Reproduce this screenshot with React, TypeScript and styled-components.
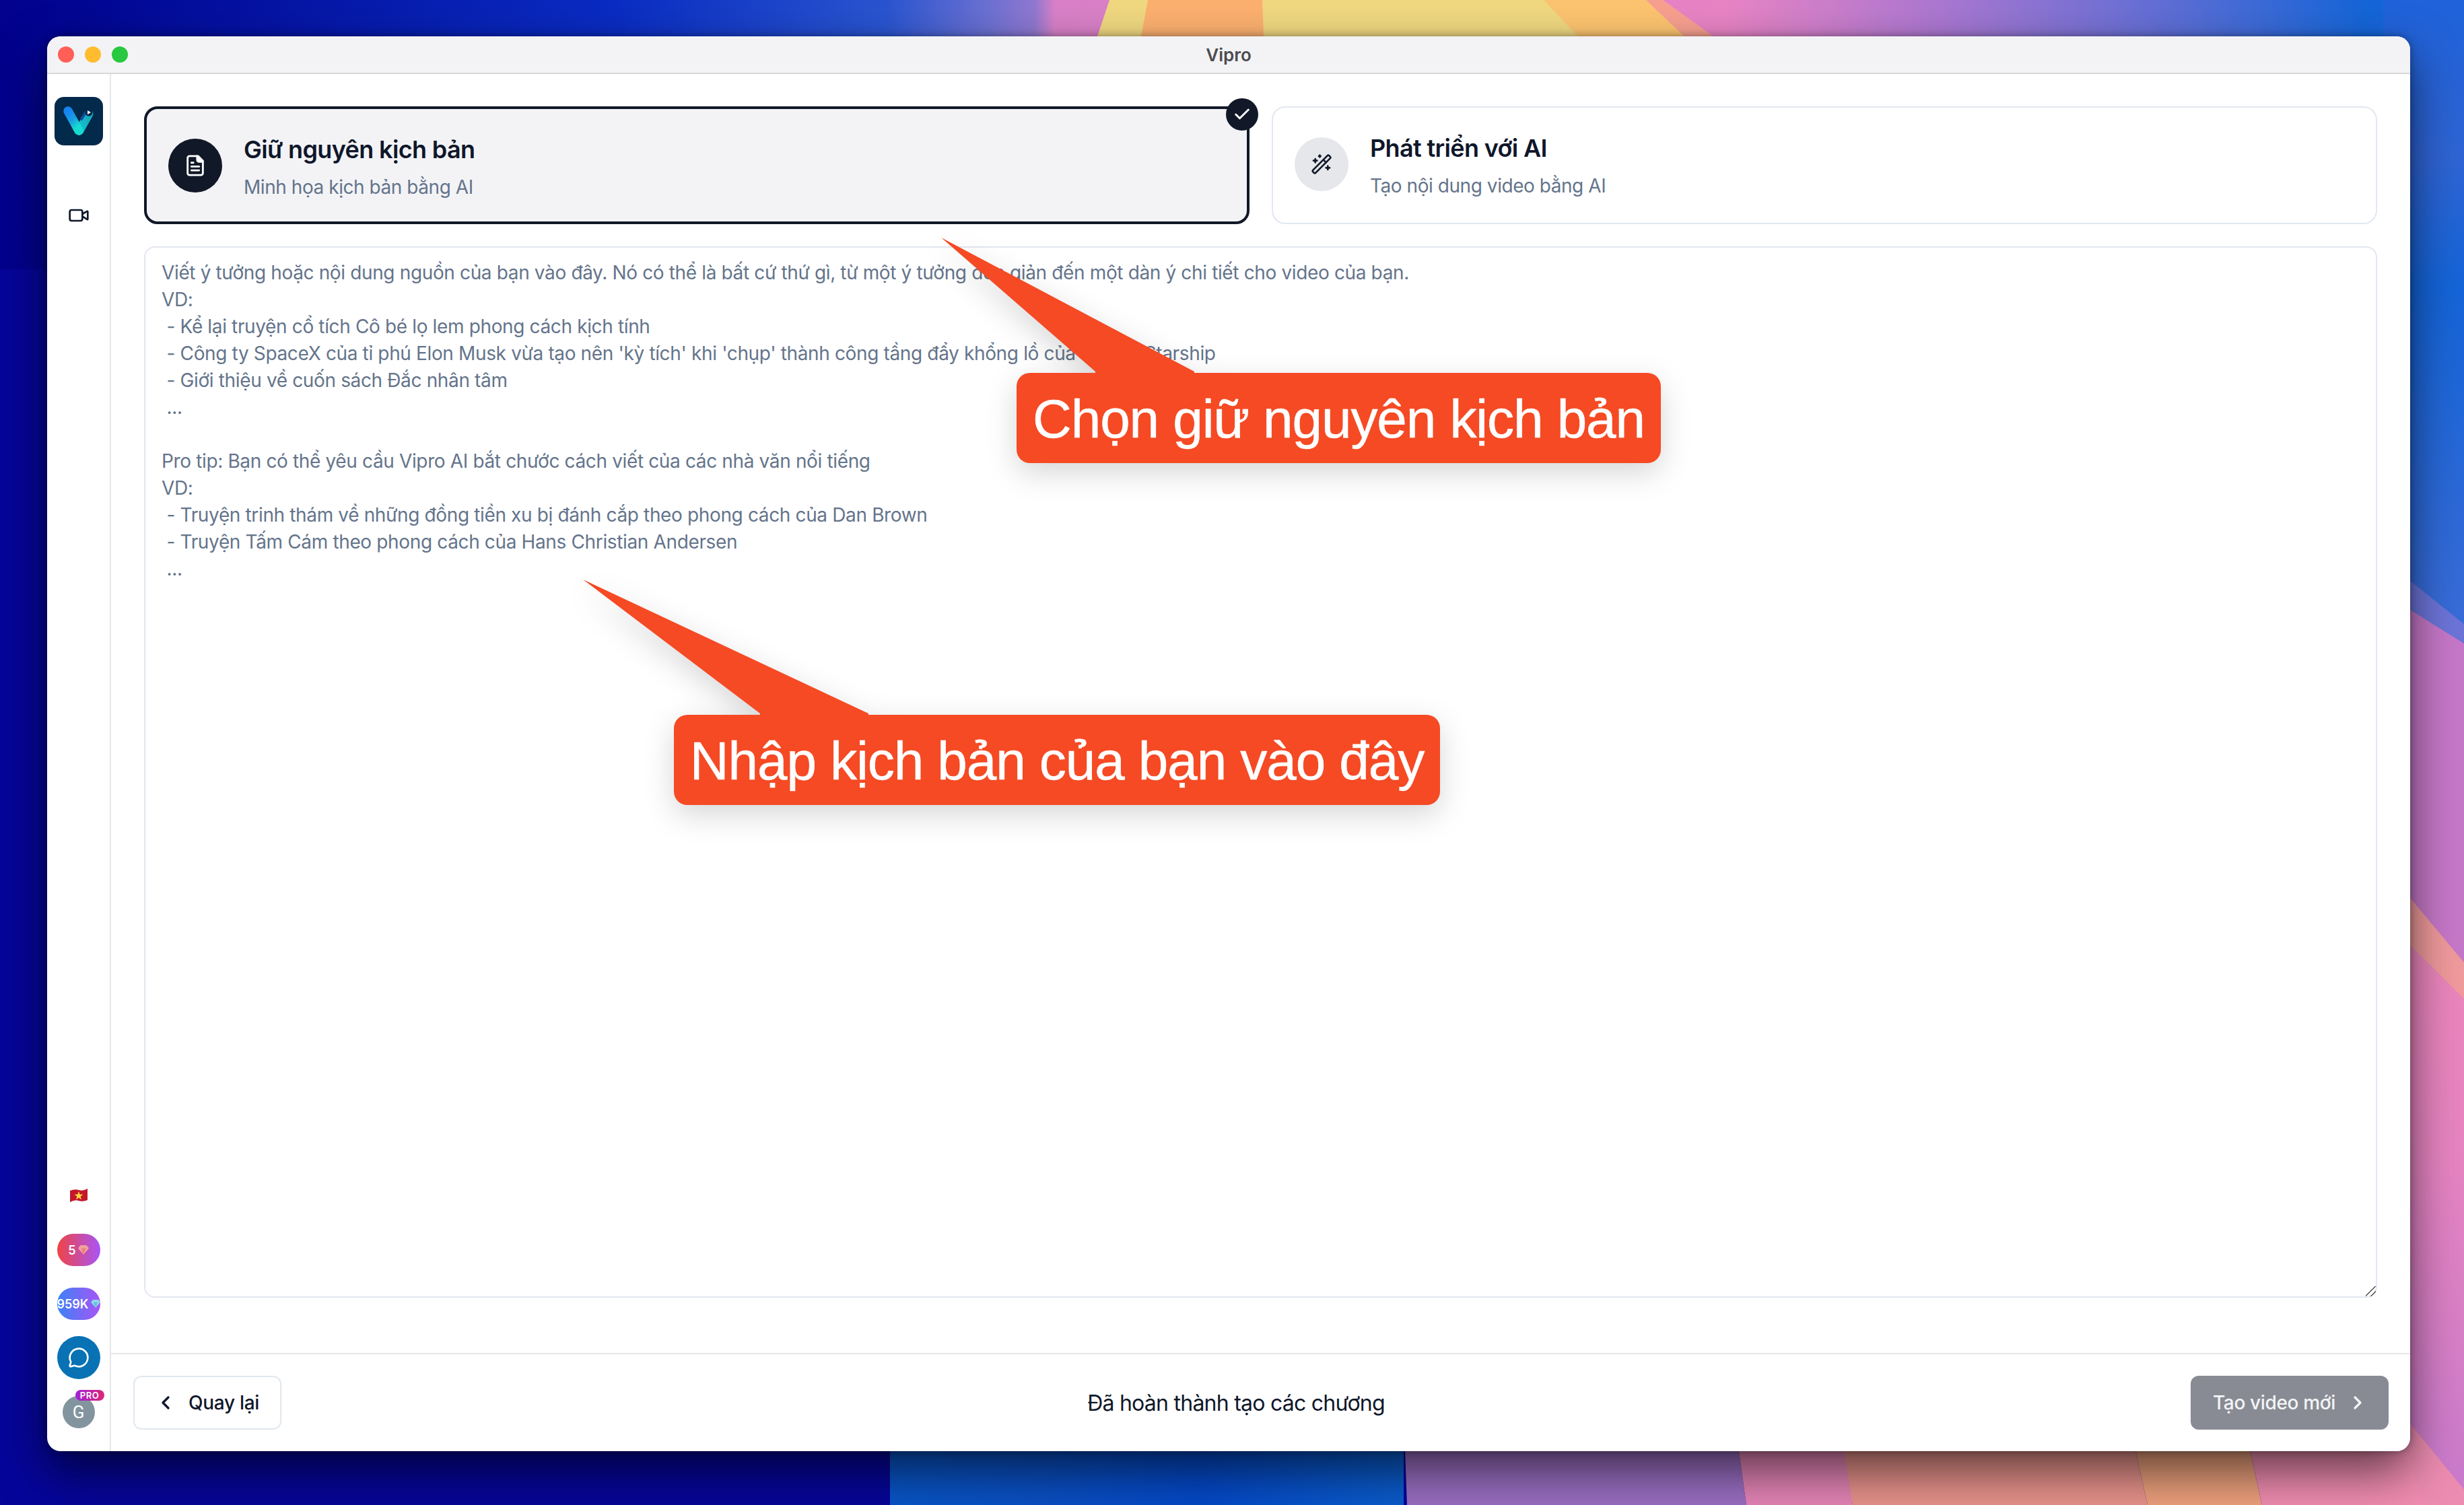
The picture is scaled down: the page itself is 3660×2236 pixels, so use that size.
import React from 'react'
import styled, { createGlobalStyle } from 'styled-components'
import { ChevronLeft, ChevronRight, Check, MessageCircle, Video, WandSparkles } from 'lucide-react'

const GlobalStyle = createGlobalStyle`
  html, body {
    margin: 0;
    padding: 0;
  }
  body {
    font-family: Inter, "Liberation Sans", sans-serif;
  }
  * {
    box-sizing: border-box;
  }
`

const Page = styled.div`
  position: relative;
  width: 3660px;
  height: 2236px;
  padding: 54px 80px 80px 70px;
  overflow: hidden;
  display: flex;
`

const WallpaperSvg = styled.svg`
  position: absolute;
  inset: 0;
  width: 3660px;
  height: 2236px;
`

const Window = styled.div`
  position: relative;
  flex: 1;
  display: flex;
  flex-direction: column;
  background: white;
  border-radius: 20px;
  overflow: hidden;
`

const WindowShadow = styled.div`
  position: relative;
  flex: 1;
  display: flex;
  border-radius: 20px;
  box-shadow: 0 30px 70px rgba(0, 0, 0, 0.6), 0 0 12px rgba(0, 0, 0, 0.35);
`

const TitleBar = styled.div`
  position: relative;
  height: 56px;
  flex-shrink: 0;
  display: flex;
  align-items: center;
  gap: 16px;
  padding-left: 16px;
  background: #f3f3f6;
  border-bottom: 2px solid #d9d9db;
`

const Dot = styled.span<{ $color: string }>`
  width: 24px;
  height: 24px;
  border-radius: 50%;
  background: ${p => p.$color};
`

const WindowTitle = styled.div`
  position: absolute;
  left: 0;
  right: 0;
  text-align: center;
  font-size: 26px;
  font-weight: 600;
  color: #4c4c4f;
`

const Body = styled.div`
  flex: 1;
  min-height: 0;
  display: flex;
`

const Sidebar = styled.aside`
  width: 95px;
  flex-shrink: 0;
  display: flex;
  flex-direction: column;
  align-items: center;
  justify-content: space-between;
  padding: 34px 0 34px;
  border-right: 2px solid #e5e7eb;
`

const SideTop = styled.div`
  display: flex;
  flex-direction: column;
  align-items: center;
  gap: 88px;
  color: #0f172a;
`

const SideBottom = styled.div`
  display: flex;
  flex-direction: column;
  align-items: center;
`

const FlagSvg = styled.svg`
  width: 28px;
  height: 22px;
  margin-bottom: 46px;
`

const Pill = styled.div<{ $from: string }>`
  width: 64px;
  height: 48px;
  border-radius: 24px;
  margin-bottom: ${p => (p.$from === '#ef4444' ? 32 : 24)}px;
  display: flex;
  align-items: center;
  justify-content: center;
  gap: 3px;
  background: linear-gradient(90deg, ${p => p.$from}, #a855f7);
  color: white;
  font-size: 18px;
  font-weight: 600;
  white-space: nowrap;
  overflow: hidden;
`

const ChatBtn = styled.div`
  width: 64px;
  height: 64px;
  border-radius: 50%;
  margin-bottom: 25px;
  background: #0872b4;
  color: white;
  display: flex;
  align-items: center;
  justify-content: center;
`

const Avatar = styled.div`
  position: relative;
  width: 48px;
  height: 48px;
  border-radius: 50%;
  background: #82959f;
  color: white;
  font-family: Roboto, sans-serif;
  font-size: 26px;
  display: flex;
  align-items: center;
  justify-content: center;
`

const ProBadge = styled.span`
  position: absolute;
  left: 19px;
  top: -9px;
  width: 43px;
  height: 16px;
  border-radius: 8px;
  background: linear-gradient(90deg, #a021d8, #db2777);
  font-family: Inter, sans-serif;
  font-size: 13px;
  font-weight: 600;
  letter-spacing: 0.5px;
  line-height: 16px;
  text-align: center;
`

const Main = styled.main`
  flex: 1;
  min-width: 0;
  display: flex;
  flex-direction: column;
`

const Content = styled.div`
  flex: 1;
  min-height: 0;
  display: flex;
  flex-direction: column;
  gap: 33px;
  padding: 48px 49px 82px 49px;
`

const Cards = styled.div`
  display: grid;
  grid-template-columns: 1fr 1fr;
  gap: 33px;
  flex-shrink: 0;
`

const Card = styled.div<{ $active?: boolean }>`
  position: relative;
  height: 175px;
  display: flex;
  align-items: center;
  gap: 32px;
  padding: 0 32px ${p => (p.$active ? 0 : 3)}px;
  border-radius: 20px;
  border: ${p => (p.$active ? '4px solid #111827' : '2px solid #e2e8f0')};
  background: ${p => (p.$active ? '#f3f3f6' : 'white')};
`

const CardIcon = styled.div<{ $active?: boolean }>`
  width: 80px;
  height: 80px;
  border-radius: 50%;
  flex-shrink: 0;
  display: flex;
  align-items: center;
  justify-content: center;
  background: ${p => (p.$active ? '#111827' : '#e5e7eb')};
  color: ${p => (p.$active ? 'white' : '#111827')};
`

const CardTitle = styled.div`
  font-size: 36px;
  line-height: 56px;
  font-weight: 600;
  letter-spacing: -0.65px;
  color: #0f172a;
`

const CardSub = styled.div`
  margin-top: 8px;
  font-size: 28px;
  line-height: 40px;
  letter-spacing: -0.45px;
  color: #64748b;
`

const CheckMark = styled.div`
  position: absolute;
  top: -16px;
  right: -17px;
  width: 48px;
  height: 48px;
  border-radius: 50%;
  background: #111827;
  color: white;
  display: flex;
  align-items: center;
  justify-content: center;
`

const Script = styled.div`
  flex: 1;
  min-height: 0;
  padding: 17px 24px;
  border: 2px solid #e2e8f0;
  border-radius: 16px;
  font-size: 28px;
  line-height: 40px;
  letter-spacing: -0.36px;
  color: #64748b;
  white-space: pre-wrap;
  overflow: auto;
  resize: vertical;

  &::-webkit-resizer {
    background: linear-gradient(
      135deg,
      transparent 46%,
      #555 46%,
      #555 53%,
      transparent 53%,
      transparent 70%,
      #555 70%,
      #555 77%,
      transparent 77%
    );
  }
`

const Footer = styled.div`
  flex-shrink: 0;
  height: 146px;
  display: flex;
  align-items: center;
  justify-content: space-between;
  padding: 0 32px 0 33px;
  border-top: 2px solid #e5e7eb;
`

const BackBtn = styled.button`
  width: 220px;
  height: 80px;
  display: flex;
  align-items: center;
  gap: 18px;
  padding: 0 0 0 30px;
  font: 500 28px Inter, sans-serif;
  letter-spacing: -0.3px;
  color: #0f172a;
  background: white;
  border: 2px solid #e2e8f0;
  border-radius: 12px;
`

const NextBtn = styled.button`
  width: 294px;
  height: 80px;
  display: flex;
  align-items: center;
  gap: 17px;
  padding: 0 0 0 33px;
  font: 500 28px Inter, sans-serif;
  letter-spacing: -0.36px;
  color: #f3f4f6;
  background: #888b94;
  border: none;
  border-radius: 12px;
`

const Status = styled.div`
  font-size: 32px;
  letter-spacing: -0.75px;
  color: #0f172a;
`

const Callout = styled.div<{ $left: number; $top: number; $width: number }>`
  position: absolute;
  left: ${p => p.$left}px;
  top: ${p => p.$top}px;
  width: ${p => p.$width}px;
  height: 134px;
  padding-top: 4px;
  border-radius: 20px;
  background: #f54a24;
  color: white;
  font-family: "Liberation Sans", Arial, sans-serif;
  font-size: 80px;
  letter-spacing: -1.05px;
  -webkit-text-stroke: 0.6px white;
  display: flex;
  align-items: center;
  justify-content: center;
  white-space: nowrap;
  filter: drop-shadow(0 14px 22px rgba(0, 0, 0, 0.16));
`

const Pointer = styled.svg<{ $left: number }>`
  position: absolute;
  left: ${p => p.$left}px;
  bottom: calc(100% - 2px);
`

const scriptText = `Viết ý tưởng hoặc nội dung nguồn của bạn vào đây. Nó có thể là bất cứ thứ gì, từ một ý tưởng đơn giản đến một dàn ý chi tiết cho video của bạn.
VD:
 - Kể lại truyện cổ tích Cô bé lọ lem phong cách kịch tính
 - Công ty SpaceX của tỉ phú Elon Musk vừa tạo nên 'kỳ tích' khi 'chụp' thành công tầng đẩy khổng lồ của tên lửa Starship
 - Giới thiệu về cuốn sách Đắc nhân tâm
 ...

Pro tip: Bạn có thể yêu cầu Vipro AI bắt chước cách viết của các nhà văn nổi tiếng
VD:
 - Truyện trinh thám về những đồng tiền xu bị đánh cắp theo phong cách của Dan Brown
 - Truyện Tấm Cám theo phong cách của Hans Christian Andersen
 ...`

const Wallpaper = () => (
  <WallpaperSvg viewBox="0 0 3660 2236">
    <defs>
      <linearGradient id="top" x1="0" x2="3660" y1="0" y2="0" gradientUnits="userSpaceOnUse">
        <stop offset="0" stopColor="#01018c" />
        <stop offset="0.25" stopColor="#0a2cc2" />
        <stop offset="0.36" stopColor="#2a55d0" />
        <stop offset="0.4" stopColor="#6a70d2" />
        <stop offset="0.42" stopColor="#9078d0" />
        <stop offset="0.428" stopColor="#d880c8" />
        <stop offset="0.7" stopColor="#e884c4" />
        <stop offset="0.78" stopColor="#b078d0" />
        <stop offset="0.86" stopColor="#7070d4" />
        <stop offset="0.96" stopColor="#1565d8" />
      </linearGradient>
      <linearGradient id="rightPink" x1="0" x2="0" y1="1400" y2="2236" gradientUnits="userSpaceOnUse">
        <stop offset="0" stopColor="#ec86bc" />
        <stop offset="0.4" stopColor="#e684c2" />
        <stop offset="1" stopColor="#c87acc" />
      </linearGradient>
      <linearGradient id="rightBlue" x1="0" x2="0" y1="0" y2="950" gradientUnits="userSpaceOnUse">
        <stop offset="0" stopColor="#1f62da" />
        <stop offset="0.25" stopColor="#2f64d4" />
        <stop offset="0.45" stopColor="#1464d8" />
        <stop offset="1" stopColor="#3b6cd8" />
      </linearGradient>
      <linearGradient id="bottomBlue" x1="1322" x2="2085" y1="0" y2="0" gradientUnits="userSpaceOnUse">
        <stop offset="0" stopColor="#0855c8" />
        <stop offset="0.3" stopColor="#0a4fc4" />
        <stop offset="0.6" stopColor="#0448c8" />
        <stop offset="1" stopColor="#0a5ccc" />
      </linearGradient>
    </defs>
    <rect width="3660" height="2236" fill="#05059a" />
    <rect width="3660" height="400" fill="url(#top)" />
    <polygon points="1648,0 2445,0 2502,54 1630,54" fill="#f0d880" />
    <polygon points="1705,0 1875,0 1877,54 1695,54" fill="#fcb070" />
    <polygon points="2293,0 2445,0 2502,54 2344,54" fill="#fcc470" />
    <polygon points="2445,0 2470,0 2545,54 2502,54" fill="#f8a090" />
    <rect x="3540" y="0" width="120" height="960" fill="url(#rightBlue)" />
    <polygon points="3540,831 3660,927 3660,956 3540,881" fill="#6c74d8" />
    <polygon points="3540,881 3660,956 3660,1500 3540,1400" fill="#c678c8" />
    <polygon points="3540,1365 3660,1484 3660,2236 3540,2236" fill="url(#rightPink)" />
    <polygon points="3540,1286 3660,1430 3660,1484 3540,1365" fill="#f09a9c" />
    <polygon points="3540,2066 3660,2213 3660,2236 3540,2236" fill="#ec8cb0" />
    <rect x="1322" y="2100" width="763" height="136" fill="url(#bottomBlue)" />
    <polygon points="2085,2100 2575,2100 2594,2236 2090,2236" fill="#9a6ec2" />
    <polygon points="2575,2100 2740,2100 2752,2236 2594,2236" fill="#e484b6" />
    <polygon points="2730,2100 3160,2100 3190,2236 2752,2236" fill="#e8928c" />
    <polygon points="3160,2100 3330,2100 3360,2236 3190,2236" fill="#eca07c" />
    <polygon points="3330,2100 3560,2100 3600,2236 3360,2236" fill="#f08cb0" />
  </WallpaperSvg>
)

const Logo = () => (
  <svg width="72" height="72" viewBox="0 0 72 72">
    <defs>
      <linearGradient id="vLeft" x1="0" x2="0.5" y1="0" y2="1">
        <stop offset="0" stopColor="#1583f0" />
        <stop offset="0.55" stopColor="#1aa0e0" />
        <stop offset="1" stopColor="#16dcd0" />
      </linearGradient>
      <linearGradient id="vRight" x1="0" x2="1" y1="1" y2="0">
        <stop offset="0" stopColor="#12c4d4" />
        <stop offset="1" stopColor="#18a8b8" />
      </linearGradient>
    </defs>
    <rect width="72" height="72" rx="14" fill="#03294b" />
    <path d="M37 50 L51 25" stroke="url(#vRight)" strokeWidth="13" strokeLinecap="round" />
    <path d="M20 21 L36 50" stroke="url(#vLeft)" strokeWidth="13.5" strokeLinecap="round" />
    <path d="M40 33 L47 22" stroke="#0f4f9a" strokeWidth="4" strokeLinecap="round" />
    <circle cx="51" cy="23" r="5.5" fill="#03294b" />
    <polygon points="49,20 49,26 54,23" fill="white" />
  </svg>
)

const Flag = () => (
  <FlagSvg viewBox="0 0 28 22">
    <path d="M1 4 Q8 1 14 3 T27 1 V18 Q20 21 14 19 T1 21 Z" fill="#c3182c" />
    <polygon points="14,5 15.6,9.6 20.5,9.7 16.6,12.6 18,17.3 14,14.5 10,17.3 11.4,12.6 7.5,9.7 12.4,9.6" fill="#ffd83d" />
  </FlagSvg>
)

const Diamond = ({ light, dark }: { light: string; dark: string }) => (
  <svg width="16" height="14" viewBox="0 0 16 14">
    <polygon points="3.5,0 12.5,0 16,4.5 8,14 0,4.5" fill={light} />
    <polygon points="4.5,4.5 11.5,4.5 8,14" fill={dark} />
  </svg>
)

const DocIcon = () => (
  <svg width="34" height="34" viewBox="0 0 24 24" fill="none" stroke="white" strokeWidth="2" strokeLinecap="round" strokeLinejoin="round">
    <path d="M15 2H6a2 2 0 0 0-2 2v16a2 2 0 0 0 2 2h12a2 2 0 0 0 2-2V7Z" />
    <path d="M14 2v4a2 2 0 0 0 2 2h4" fill="white" />
    <path d="M10 9H8" />
    <path d="M16 13H8" />
    <path d="M16 17H8" />
  </svg>
)

const App = () => {
  return (
    <Page>
      <GlobalStyle />
      <Wallpaper />
      <WindowShadow>
        <Window>
          <TitleBar>
            <Dot $color="#ff5f57" />
            <Dot $color="#febc2e" />
            <Dot $color="#28c840" />
            <WindowTitle>Vipro</WindowTitle>
          </TitleBar>
          <Body>
            <Sidebar>
              <SideTop>
                <Logo />
                <Video size={32} strokeWidth={2} />
              </SideTop>
              <SideBottom>
                <Flag />
                <Pill $from="#ef4444">5 <Diamond light="#f4a0a0" dark="#ea8080" /></Pill>
                <Pill $from="#3b82f6">959K <Diamond light="#90d8ec" dark="#68bce0" /></Pill>
                <ChatBtn><MessageCircle size={32} strokeWidth={2} /></ChatBtn>
                <Avatar>
                  G
                  <ProBadge>PRO</ProBadge>
                </Avatar>
              </SideBottom>
            </Sidebar>
            <Main>
              <Content>
                <Cards>
                  <Card $active>
                    <CardIcon $active><DocIcon /></CardIcon>
                    <div>
                      <CardTitle>Giữ nguyên kịch bản</CardTitle>
                      <CardSub>Minh họa kịch bản bằng AI</CardSub>
                    </div>
                    <CheckMark><Check size={28} strokeWidth={2.5} /></CheckMark>
                  </Card>
                  <Card>
                    <CardIcon><WandSparkles size={32} strokeWidth={2} /></CardIcon>
                    <div>
                      <CardTitle>Phát triển với AI</CardTitle>
                      <CardSub>Tạo nội dung video bằng AI</CardSub>
                    </div>
                  </Card>
                </Cards>
                <Script>{scriptText}</Script>
              </Content>
              <Footer>
                <BackBtn><ChevronLeft size={32} strokeWidth={2.5} />Quay lại</BackBtn>
                <Status>Đã hoàn thành tạo các chương</Status>
                <NextBtn>Tạo video mới<ChevronRight size={32} strokeWidth={2.5} /></NextBtn>
              </Footer>
            </Main>
          </Body>
        </Window>
      </WindowShadow>
      <Callout $left={1510} $top={554} $width={957}>
        <Pointer $left={-112} width="376" height="203" viewBox="0 0 376 203">
          <polygon points="0,0 229,199 229,203 376,203 376,199" fill="#f54a24" />
        </Pointer>
        Chọn giữ nguyên kịch bản
      </Callout>
      <Callout $left={1001} $top={1062} $width={1138}>
        <Pointer $left={-135} width="424" height="203" viewBox="0 0 424 203">
          <polygon points="0,0 263,199 263,203 424,203 424,199" fill="#f54a24" />
        </Pointer>
        Nhập kịch bản của bạn vào đây
      </Callout>
    </Page>
  )
}

export default App
